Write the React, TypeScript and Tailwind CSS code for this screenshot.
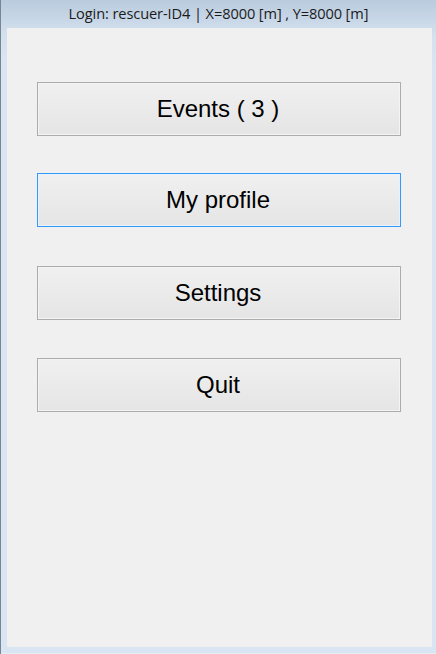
import React from "react";

const items = ["Events ( 3 )", "My profile", "Settings", "Quit"];

export default function App() {
  return (
    <div className="w-[436px] h-[654px] flex flex-col border-l border-[#7a8593] bg-[linear-gradient(180deg,#b9cbdd_0px,#d3e0ee_34px,#d9e5f2_60px,#d9e5f2_100%)]">
      <div className="h-[28px] flex items-center justify-center pb-[1px] text-[14.6px] text-[#1b1b1b] font-['Open_Sans','Noto_Sans',sans-serif] tracking-[-0.1px]">
        Login: rescuer-ID4 | X=8000 [m] , Y=8000 [m]
      </div>
      <div className="flex-1 pl-[6px] pr-[4px] pb-[6px] flex">
        <div className="flex-1 bg-[#f0f0f0] flex flex-col gap-[38px] pt-[54px] pl-[30px]">
          {items.map((label, i) => (
            <button
              key={label}
              className={`w-[364px] h-[54px] flex items-center justify-center pb-[1px] pr-[2px] text-[24px] text-black font-['Liberation_Sans',Arial,sans-serif] bg-[linear-gradient(180deg,#f0f0f0,#e5e5e5)] border ${
                i === 1
                  ? "border-[#3399ff] shadow-[inset_0_0_0_1px_#e8f2fd] -mt-[1px] mb-[1px]"
                  : "border-[#acacac] shadow-[inset_0_0_0_1px_#f4f4f4]"
              }`}
            >
              {label}
            </button>
          ))}
        </div>
      </div>
      <div className="h-[1px] bg-[#e6edf5]" />
    </div>
  );
}
